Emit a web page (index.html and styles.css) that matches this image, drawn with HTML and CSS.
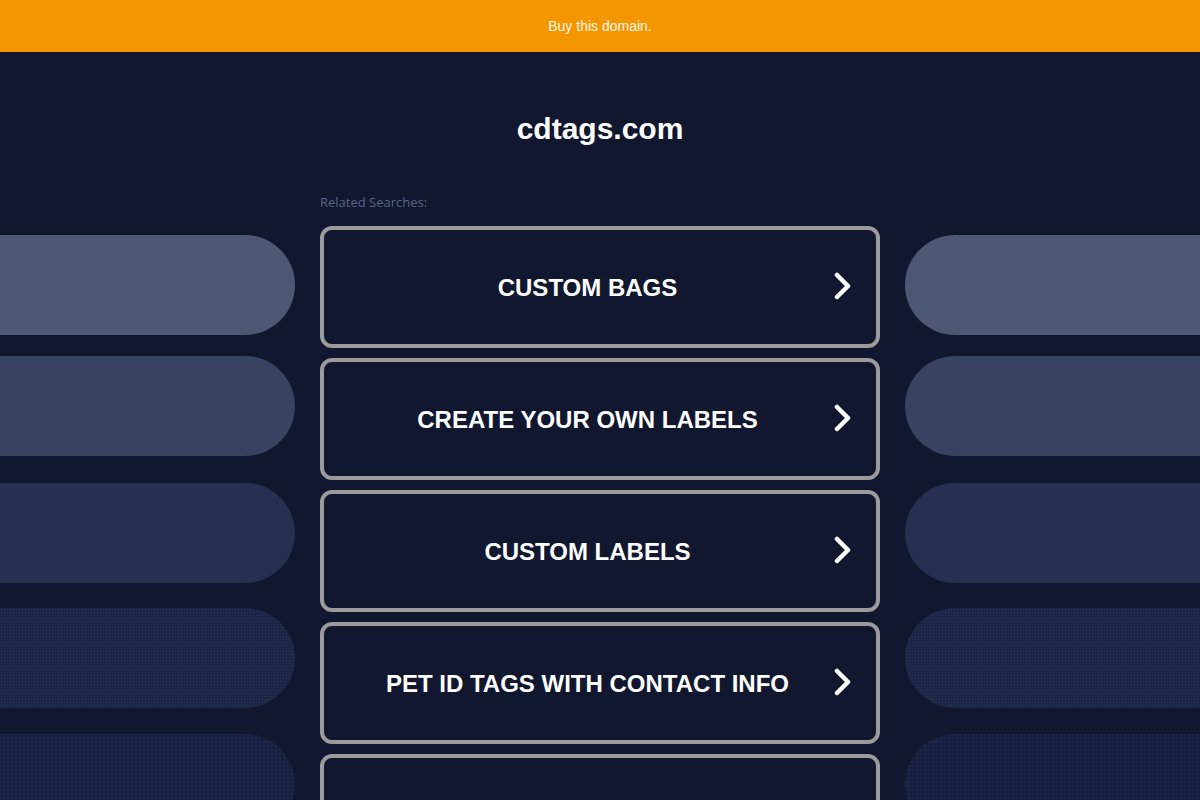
FILE: index.html
```html
<!DOCTYPE html>
<html lang="en">
<head>
<meta charset="utf-8">
<title>cdtags.com</title>
<link rel="stylesheet" href="styles.css">
</head>
<body>
<div class="topbar"><a class="buy" href="#">Buy this domain.</a></div>
<div class="page">
  <div class="side side-left">
    <div class="pill p1"></div>
    <div class="pill p2"></div>
    <div class="pill p3"></div>
    <div class="pill p4"></div>
    <div class="pill p5"></div>
  </div>
  <div class="center">
    <h1 class="domain">cdtags.com</h1>
    <div class="related">Related Searches:</div>
    <a class="box" href="#"><span class="label">CUSTOM BAGS</span><svg class="chev" viewBox="0 0 20 28" width="20" height="28"><path d="M4 3 L15 14 L4 25" fill="none" stroke="#fff" stroke-width="4.5" stroke-linecap="round" stroke-linejoin="round"/></svg></a>
    <a class="box" href="#"><span class="label">CREATE YOUR OWN LABELS</span><svg class="chev" viewBox="0 0 20 28" width="20" height="28"><path d="M4 3 L15 14 L4 25" fill="none" stroke="#fff" stroke-width="4.5" stroke-linecap="round" stroke-linejoin="round"/></svg></a>
    <a class="box" href="#"><span class="label">CUSTOM LABELS</span><svg class="chev" viewBox="0 0 20 28" width="20" height="28"><path d="M4 3 L15 14 L4 25" fill="none" stroke="#fff" stroke-width="4.5" stroke-linecap="round" stroke-linejoin="round"/></svg></a>
    <a class="box" href="#"><span class="label">PET ID TAGS WITH CONTACT INFO</span><svg class="chev" viewBox="0 0 20 28" width="20" height="28"><path d="M4 3 L15 14 L4 25" fill="none" stroke="#fff" stroke-width="4.5" stroke-linecap="round" stroke-linejoin="round"/></svg></a>
    <a class="box" href="#"><svg class="chev" viewBox="0 0 20 28" width="20" height="28"><path d="M4 3 L15 14 L4 25" fill="none" stroke="#fff" stroke-width="4.5" stroke-linecap="round" stroke-linejoin="round"/></svg></a>
  </div>
  <div class="side side-right">
    <div class="pill p1"></div>
    <div class="pill p2"></div>
    <div class="pill p3"></div>
    <div class="pill p4"></div>
    <div class="pill p5"></div>
  </div>
</div>
</body>
</html>
```
FILE: styles.css
```css
html, body {
  margin: 0;
  padding: 0;
  background: #11172e;
  font-family: "Liberation Sans", Arial, sans-serif;
  overflow-x: hidden;
}
.topbar {
  height: 52px;
  background: #f49600;
  display: flex;
  align-items: center;
  justify-content: center;
}
.buy {
  color: #fdf6ec;
  font-size: 14px;
  text-decoration: none;
}
.page {
  display: grid;
  grid-template-columns: 1fr 560px 1fr;
  column-gap: 25px;
}
.side {
  display: flex;
  flex-direction: column;
  padding-top: 183px;
}
.pill {
  height: 100px;
  flex: none;
}
.side-left .pill { border-radius: 0 50px 50px 0; }
.side-right .pill { border-radius: 50px 0 0 50px; }
.p1 { background: #4d5673; }
.p2 { background: #3a4261; margin-top: 21px; }
.p3 { background: #283051; margin-top: 27px; }
.p4 {
  background-color: #1e2647;
  background-image: radial-gradient(rgba(60, 72, 110, 0.45) 0.6px, transparent 0.9px);
  background-size: 3px 3px;
  margin-top: 25px;
}
.p5 {
  background-color: #1c2446;
  background-image: radial-gradient(rgba(14, 20, 45, 0.6) 0.7px, transparent 1px);
  background-size: 4px 4px;
  margin-top: 26px;
}
.center {
  display: flex;
  flex-direction: column;
}
.domain {
  margin: 59px 0 0;
  font-size: 30px;
  line-height: 36px;
  font-weight: bold;
  color: #fff;
  text-align: center;
}
.related {
  margin-top: 47px;
  font-family: "Open Sans", sans-serif;
  font-size: 13px;
  line-height: 16px;
  color: #5b6488;
}
.box {
  margin-top: 16px;
  height: 122px;
  box-sizing: border-box;
  border: 4px solid #9b9b9b;
  border-radius: 12px;
  display: flex;
  align-items: center;
  justify-content: center;
  padding-right: 25px;
  padding-top: 2px;
  position: relative;
  text-decoration: none;
}
.box + .box { margin-top: 10px; }
.label {
  color: #fff;
  font-size: 24px;
  font-weight: bold;
  line-height: 28px;
}
.chev {
  position: absolute;
  right: 23px;
  top: 42px;
}
```
